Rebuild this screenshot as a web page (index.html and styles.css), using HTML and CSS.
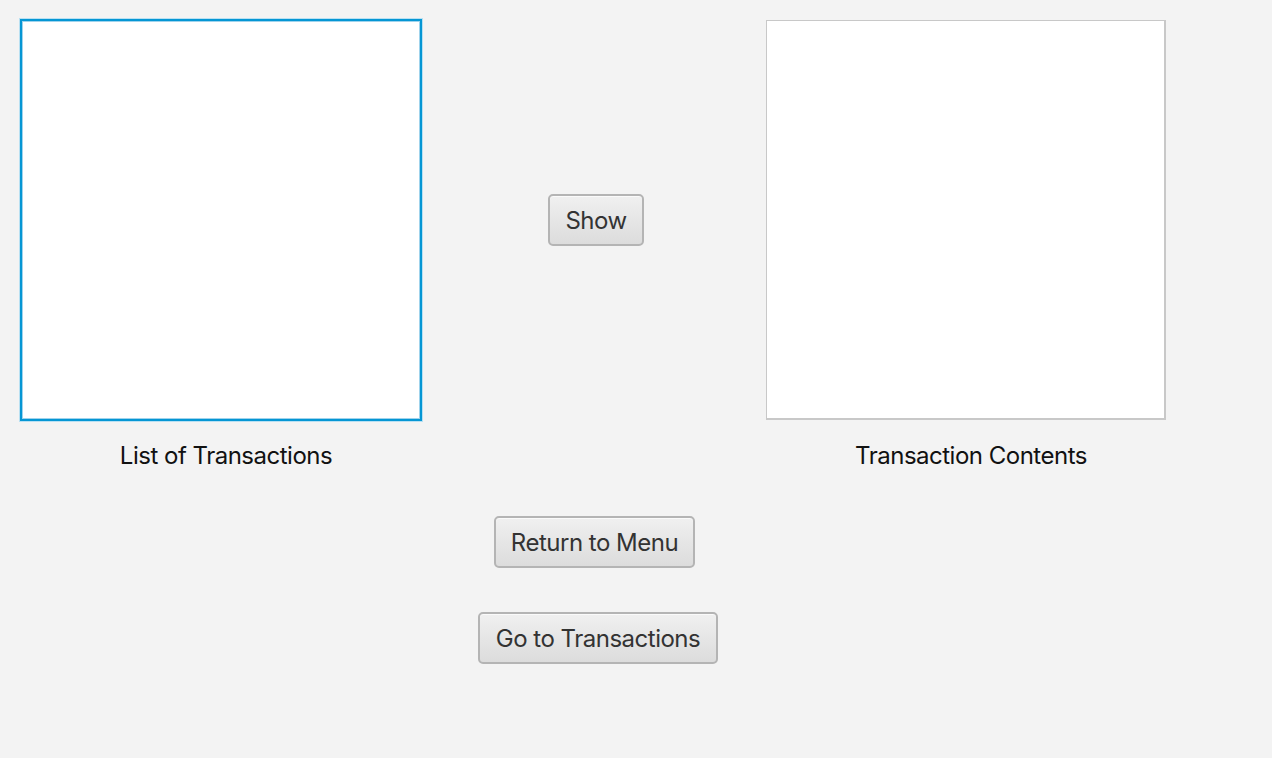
FILE: index.html
```html
<!DOCTYPE html>
<html>
<head>
<meta charset="utf-8">
<link rel="stylesheet" href="styles.css">
</head>
<body>
<div class="app">
  <div class="top">
    <div class="col left">
      <div class="list focused"></div>
      <div class="caption">List of Transactions</div>
    </div>
    <div class="middle">
      <button class="btn show">Show</button>
    </div>
    <div class="col right">
      <div class="list"></div>
      <div class="caption">Transaction Contents</div>
    </div>
  </div>
  <div class="actions">
    <button class="btn ret">Return to Menu</button>
    <button class="btn go">Go to Transactions</button>
  </div>
</div>
</body>
</html>
```
FILE: styles.css
```css
html, body {
  margin: 0;
  padding: 0;
  background: #f3f3f3;
  width: 1272px;
  height: 758px;
  overflow: hidden;
  font-family: Inter, "Noto Sans", sans-serif;
}
.app {
  display: flex;
  flex-direction: column;
}
.top {
  display: flex;
  padding: 19px 0 0 20px;
}
.col {
  display: flex;
  flex-direction: column;
}
.left { width: 402px; }
.right { width: 400px; padding-top: 1px; }
.list {
  background: #fff;
  box-sizing: border-box;
  height: 400px;
  border: 2px solid #c8c8c8;
  border-width: 1px 2px 2px 1px;
}
.list.focused {
  height: 402px;
  border: 2px solid #0596d4;
  box-shadow: 0 0 0 1px #b8e0f2, inset 0 0 0 1px #9fd3ec;
}
.right .list { width: 400px; }
.caption {
  font-size: 24px;
  color: #111;
  text-align: center;
  padding-left: 10px;
  margin-top: 19px;
  line-height: 32px;
  letter-spacing: -0.5px;
  white-space: nowrap;
}
.right .caption { margin-top: 20px; }
.middle {
  width: 344px;
  display: flex;
  justify-content: center;
  padding-left: 4px;
  box-sizing: border-box;
  padding-top: 175px;
  align-items: flex-start;
}
.btn {
  font-family: Inter, "Noto Sans", sans-serif;
  font-size: 24px;
  letter-spacing: -0.5px;
  color: #333;
  height: 52px;
  box-sizing: border-box;
  border: 2px solid #b4b4b4;
  border-radius: 5px;
  background: linear-gradient(#f0f0f0, #dcdcdc);
  box-shadow: inset 0 1px 0 #fafafa;
  padding: 2px 0 0;
  line-height: 46px;
  white-space: nowrap;
  text-align: center;
  cursor: default;
}
.show { width: 96px; }
.actions {
  display: flex;
  flex-direction: column;
  align-items: flex-start;
  margin-top: 44px;
  gap: 44px;
}
.ret { margin-left: 494px; width: 201px; }
.go { margin-left: 478px; width: 240px; }
```
